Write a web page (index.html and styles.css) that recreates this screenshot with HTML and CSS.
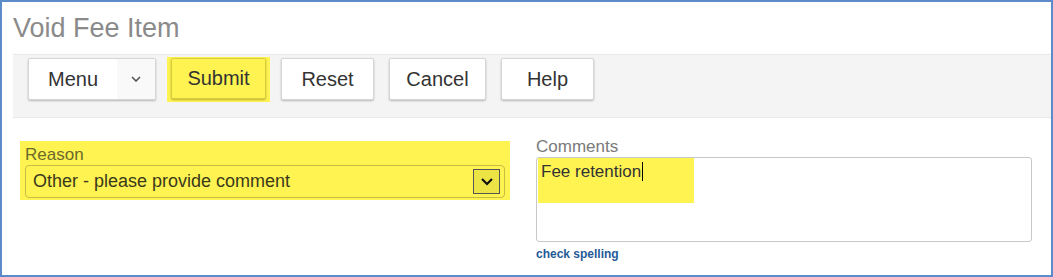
FILE: index.html
```html
<!DOCTYPE html>
<html lang="en">
<head>
  <meta charset="UTF-8">
  <title>Void Fee Item</title>
  <link rel="stylesheet" href="styles.css">
</head>
<body>
  <div class="frame">
    <h1 class="page-title">Void Fee Item</h1>

    <div class="toolbar">
      <div class="btn btn-menu">
        <span class="btn-menu-label">Menu</span>
        <span class="btn-menu-caret">
          <svg width="10" height="6" viewBox="0 0 10 6"><path d="M1 1 L5 5 L9 1" fill="none" stroke="#555" stroke-width="1.6"/></svg>
        </span>
      </div>
      <span class="mark mark-btn"><button class="btn">Submit</button></span>
      <button class="btn btn-reset">Reset</button>
      <button class="btn btn-cancel">Cancel</button>
      <button class="btn btn-help">Help</button>
    </div>

    <div class="form-row">
      <div class="field field-reason mark">
        <label class="field-label">Reason</label>
        <div class="select">
          <span class="select-value">Other - please provide comment</span>
          <span class="select-arrow">
            <svg width="14" height="9" viewBox="0 0 14 9"><path d="M2 2 L7 7 L12 2" fill="none" stroke="#111" stroke-width="2.2"/></svg>
          </span>
        </div>
      </div>

      <div class="field field-comments">
        <label class="field-label">Comments</label>
        <div class="textarea">
          <div class="mark mark-text">Fee retention<span class="caret"></span></div>
        </div>
        <a class="spell-link" href="#">check spelling</a>
      </div>
    </div>
  </div>
</body>
</html>
```

FILE: styles.css
```css
body {
  margin: 0;
  font-family: 'Liberation Sans', Arial, sans-serif;
  background-color: #fff;
}

.frame {
  width: 1053px;
  height: 277px;
  box-sizing: border-box;
  border: 2px solid #5b8bc8;
  overflow: hidden;
}

.page-title {
  margin: 0;
  padding: 10px 0 0 11px;
  height: 42px;
  font-size: 27px;
  font-weight: normal;
  line-height: 32px;
  color: #8a8a8a;
}

.toolbar {
  display: flex;
  align-items: flex-start;
  gap: 15px;
  margin-left: 11px;
  height: 64px;
  padding: 3px 0 0 15px;
  box-sizing: border-box;
  background-color: #f4f4f4;
  border-top: 1px solid #e9e9e9;
  border-bottom: 1px solid #e9e9e9;
}

.btn {
  height: 42px;
  padding: 0;
  box-sizing: border-box;
  font-family: inherit;
  font-size: 20px;
  color: #333;
  background-color: #fff;
  border: 1px solid #d6d6d6;
  border-radius: 2px;
  box-shadow: 0 1px 2px rgba(0, 0, 0, 0.25);
  display: flex;
  align-items: center;
  justify-content: center;
}

.btn-menu {
  width: 128px;
  justify-content: flex-start;
}

.btn-menu-label {
  width: 88px;
  text-align: center;
}

.btn-menu-caret {
  flex: 1;
  height: 100%;
  display: flex;
  align-items: center;
  justify-content: center;
  background-color: #f9f9f9;
}

.mark {
  background-color: #fff352;
}

.mark-btn {
  margin: -1px -4px 0;
  padding: 1px 4px 3px;
}

.mark-btn .btn {
  width: 95px;
  height: 41px;
  background-color: #fff352;
  border-color: #d8cd3c;
  box-shadow: 0 1px 2px rgba(90, 80, 0, 0.4);
}

.btn-reset { width: 93px; }
.btn-cancel { width: 97px; }
.btn-help { width: 93px; }

.form-row {
  display: flex;
  align-items: flex-start;
  gap: 26px;
  padding: 19px 0 0 18px;
}

.field-label {
  display: block;
  font-size: 17px;
  line-height: 20px;
  color: #7a7a7a;
}

.field-reason {
  width: 480px;
  margin-top: 4px;
  padding: 4px 5px 2px;
}

.field-reason .field-label {
  color: #6a6a2a;
}

.select {
  height: 33px;
  box-sizing: border-box;
  border: 1px solid #c7bd45;
  border-radius: 4px;
  display: flex;
  align-items: center;
  justify-content: space-between;
  padding: 0 4px 0 7px;
}

.select-value {
  font-size: 18px;
  color: #3a3a1a;
}

.select-arrow {
  width: 27px;
  height: 25px;
  box-sizing: border-box;
  border: 1px solid #555;
  background-color: #ece345;
  display: flex;
  align-items: center;
  justify-content: center;
}

.field-comments {
  width: 496px;
}

.textarea {
  height: 85px;
  box-sizing: border-box;
  border: 1px solid #c8c8c8;
  border-radius: 3px;
  padding: 0 0 0 1px;
}

.mark-text {
  width: 156px;
  height: 45px;
  padding: 4px 0 0 3px;
  box-sizing: border-box;
  font-size: 17px;
  color: #333;
}

.caret {
  display: inline-block;
  width: 1px;
  height: 19px;
  margin-left: 1px;
  vertical-align: -4px;
  background-color: #000;
}

.spell-link {
  display: inline-block;
  margin-top: 5px;
  font-size: 12px;
  font-weight: bold;
  color: #1f5a97;
  text-decoration: none;
}
```
